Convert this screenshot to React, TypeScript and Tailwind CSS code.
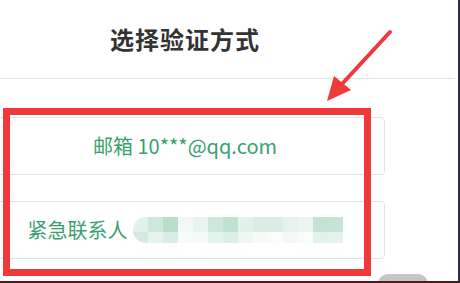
import React from 'react';

const font = '"Microsoft YaHei", "Noto Sans CJK SC", "Noto Sans", sans-serif';

// mosaic that hides the contact number
const mosaic = [
  ['#e3f1ec', '#d3eae0'],
  ['#cfe8dc', '#e6f3ee'],
  ['#b9dfcb', '#d9ede4'],
  ['#f1f8f5', '#f7fbf9'],
  ['#e8f4ef', '#f4faf7'],
  ['#cde7da', '#e4f2ec'],
  ['#bfe1d0', '#dcefe6'],
  ['#e2f1ea', '#eff7f3'],
  ['#d8ede3', '#f6fbf8'],
  ['#dbeee5', '#fbfdfc'],
  ['#e6f3ed', '#f3f9f6'],
  ['#eaf5f0', '#f8fcfa'],
  ['#c2e2d2', '#e2f1ea'],
  ['#c6e4d5', '#e5f2ec'],
];

function Mosaic() {
  return (
    <div className="flex h-[26px] overflow-hidden rounded-l-full">
      {mosaic.map((c, i) => (
        <div key={i} className="flex w-[15px] flex-col">
          <div className="h-[15px]" style={{ background: c[0] }} />
          <div className="h-[11px]" style={{ background: c[1] }} />
        </div>
      ))}
    </div>
  );
}

function Option({ children }: { children: React.ReactNode }) {
  return (
    <div className="flex h-[58px] w-[400px] items-center justify-center rounded-[4px] border border-[#d6e7e4] bg-white text-[20px] text-[#3a9f6e]">
      {children}
    </div>
  );
}

export default function App() {
  return (
    <div
      className="relative h-[283px] w-[460px] overflow-hidden border-r-2 border-b-2 border-r-[#2b2a4c] border-b-[#4a1c1c] bg-white"
      style={{ fontFamily: font }}
    >
      <div className="ml-[-15px] w-[470px]">
        <div className="flex h-[79px] items-center justify-center border-b border-[#e3e3e3] pr-[70px]">
          <h2 className="text-[24px] font-bold tracking-[1px] text-[#333333]">选择验证方式</h2>
        </div>
        <div className="flex flex-col gap-[26px] pt-[38px]">
          <Option>邮箱 10***@qq.com</Option>
          <Option>
            <span className="mr-[5px]">紧急联系人</span>
            <Mosaic />
          </Option>
        </div>
      </div>

      {/* annotation: red box */}
      <div className="absolute left-[3px] top-[108px] h-[168px] w-[368px] border-[7px] border-[#f0393a]" />

      {/* annotation: arrow */}
      <svg className="absolute left-[320px] top-[26px]" width="80" height="80" viewBox="0 0 80 80">
        <path d="M70 6 L22 58" stroke="#f0393a" strokeWidth="4" strokeLinecap="round" />
        <polygon points="7,75 14,50 31,64" fill="#f0393a" />
      </svg>

      {/* scrollbar thumb peeking at the bottom */}
      <div className="absolute left-[378px] top-[274px] h-[12px] w-[50px] rounded-t-[10px] bg-[#c6c6c6]" />
    </div>
  );
}
